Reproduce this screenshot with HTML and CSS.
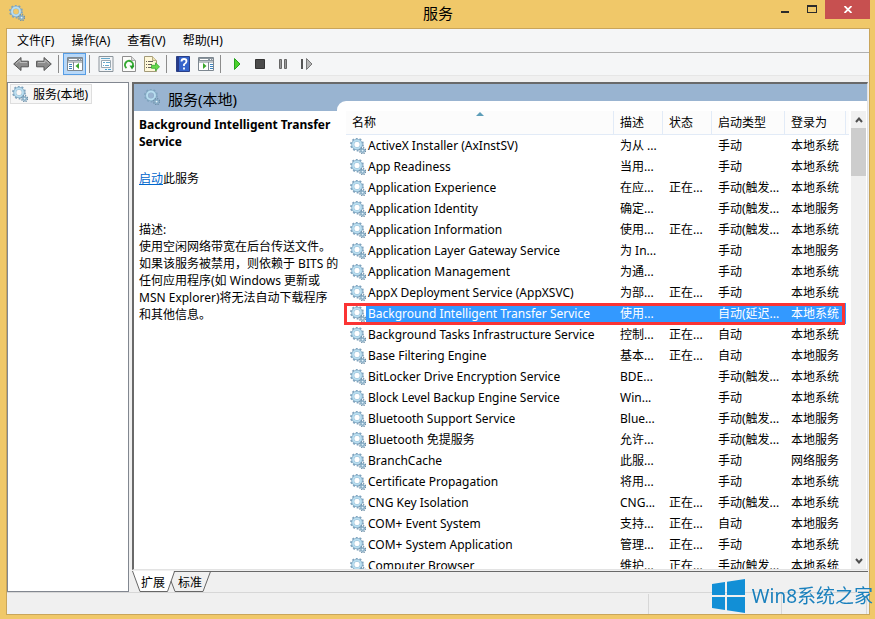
FILE: index.html
```
<!DOCTYPE html>
<html lang="zh-CN">
<head>
<meta charset="utf-8">
<title>服务</title>
<link rel="stylesheet" href="styles.css">
</head>
<body>
<svg class="defs" aria-hidden="true">
  <symbol id="gear" viewBox="0 0 16 16">
    <circle cx="7" cy="6.5" r="5.9" fill="none" stroke="#7fa3bd" stroke-width="2" stroke-dasharray="1.9 1.8"/>
    <circle cx="7" cy="6.5" r="4.2" fill="none" stroke="#83a9c4" stroke-width="2.9"/>
    <circle cx="7" cy="6.5" r="4" fill="none" stroke="#b9def0" stroke-width="1.9"/>
    <circle cx="12.600" cy="12.600" r="2.900" fill="none" stroke="#6d8fa8" stroke-width="1.500" stroke-dasharray="1.300 .98"/>
    <circle cx="12.600" cy="12.600" r="1.700" fill="#e4f2fa" stroke="#86adc6" stroke-width="1.500"/>
  </symbol>
</svg>
<header class="titlebar">
  <svg class="app-icon"><use href="#gear"/></svg>
  <h1>服务</h1>
  <div class="caption">
    <button class="cap" aria-label="最小化"><svg width="8" height="14"><path d="M0 11h8v2H0z" fill="#2b2b2b"/></svg></button>
    <button class="cap" aria-label="最大化"><svg width="10" height="14"><path d="M0 5h10v8H0zM1 7v5h8V7z" fill="#2b2b2b" fill-rule="evenodd"/></svg></button>
    <button class="cap close" aria-label="关闭"><svg width="8" height="7"><path d="M.5 0l7 7M7.500 0l-7 7" stroke="#fff" stroke-width="1.800"/></svg></button>
  </div>
</header>
<div class="window">
  <nav class="menubar">
    <button>文件(F)</button><button>操作(A)</button><button>查看(V)</button><button>帮助(H)</button>
  </nav>
  <div class="toolbar">
    <button aria-label="后退"><svg width="16" height="16"><path d="M.7 8L8 1.500v3.700h7.400v5.600H8v3.700z" fill="#8c8c8c" stroke="#555"/><path d="M3 7.500L7 4v2.500h7" fill="none" stroke="#bbb"/></svg></button>
    <button aria-label="前进"><svg width="16" height="16"><path d="M15.300 8L8 1.500v3.700H.6v5.600H8v3.700z" fill="#8c8c8c" stroke="#555"/><path d="M13 7.500L9 4v2.500H2" fill="none" stroke="#bbb"/></svg></button>
    <i class="sep"></i>
    <button class="on" aria-label="显示/隐藏控制台树"><svg width="16" height="16"><path d="M.5 1.500h15v13H.5z" fill="#fff" stroke="#7d8790"/><path d="M1 2h14v3H1z" fill="#8b959e"/><path d="M2 3.500h8M12 3.500h1M14 3.500h.7" stroke="#fff"/><path d="M1 6h14M6.500 6v8" stroke="#7d8790"/><path d="M2 8.500h3M2 10.500h3M2 12.500h3" stroke="#3d82bd"/><path d="M12 7v6L8.500 10z" fill="#3aa62a"/></svg></button>
    <i class="sep"></i>
    <button aria-label="属性"><svg width="16" height="16"><path d="M1 .5h14v15H1z" fill="#f3f5f7" stroke="#8c959c"/><path d="M3.500 4.500h9v7h-9z" fill="#fff" stroke="#9aa7b0"/><path d="M3 2.500h9M5 6.500h2M8 6.500h4M5 9.500h1M7 9.500h4" stroke="#65a8cb"/><path d="M7 13.500h2M10 13.500h3" stroke="#47a4d4"/></svg></button>
    <button aria-label="刷新"><svg width="16" height="16"><path d="M1.500.5h9l4 4v11h-13z" fill="#fcfcfa" stroke="#8e8e8e"/><path d="M10.500.5v4h4" fill="#ddd" stroke="#aaa"/><path d="M5.500 12A4 4 0 1 1 11.500 10.800" fill="none" stroke="#35a932" stroke-width="2"/><path d="M8.500 9.500l5 .3-2.500 3.700z" fill="#239d27"/></svg></button>
    <button aria-label="导出列表"><svg width="16" height="16"><path d="M.5.5h8l4 4v11H.5z" fill="#fff8d9" stroke="#a39a78"/><path d="M8.500.5v4h4" fill="#eee3b5" stroke="#b5ab85"/><path d="M2 5.500h1M4 5.500h5M2 8.500h1M4 8.500h4M2 11.500h1M4 11.500h4" stroke="#65605a"/><path d="M7.500 9.300h4V6.800l4 4-4 4v-2.500h-4z" fill="#69d94c" stroke="#35a932" stroke-width=".8"/></svg></button>
    <i class="sep"></i>
    <button aria-label="帮助"><svg width="14" height="16"><path d="M.5.5h13v15H.5z" fill="#3563ca" stroke="#2a3f86"/><path d="M1 1h2v14H1z" fill="#263a88"/><path d="M5.500 5.500Q5.500 3 8 3t2.500 2.300Q10.500 7 8 8.500V10M8 11.500v2" fill="none" stroke="#fff" stroke-width="1.8"/></svg></button>
    <button aria-label="显示/隐藏操作窗格"><svg width="16" height="16"><path d="M.5 1.500h15v13H.5z" fill="#fff" stroke="#7d8790"/><path d="M1 2h14v3H1z" fill="#8b959e"/><path d="M2 3.500h8M12 3.500h1M14 3.500h.7" stroke="#fff"/><path d="M1 6h14M10.500 6v8" stroke="#7d8790"/><path d="M12 8.500h3M12 10.500h3M12 12.500h3" stroke="#3d82bd"/><path d="M5 7v6l3.500-3z" fill="#3aa62a"/></svg></button>
    <i class="sep"></i>
    <button aria-label="启动服务"><svg width="16" height="16"><path d="M5.500 2.500v11l5.500-5.500z" fill="#4cd12e" stroke="#26a21e"/></svg></button>
    <button aria-label="停止服务"><svg width="16" height="16"><path d="M3.500 3.500h9v9h-9z" fill="#4b4b4b" stroke="#333"/></svg></button>
    <button aria-label="暂停服务"><svg width="16" height="16"><path d="M4.500 3.500h2v9h-2zM9.500 3.500h2v9h-2z" fill="#999" stroke="#666"/></svg></button>
    <button aria-label="重启服务"><svg width="16" height="16"><path d="M3 3h2v10H3z" fill="#555"/><path d="M8.500 2.500v11L14 8z" fill="#b5b5b5" stroke="#777"/></svg></button>
  </div>
  <main class="work">
    <aside class="tree"><button class="node"><svg class="ico"><use href="#gear"/></svg><span>服务(本地)</span></button></aside>
    <div class="right">
      <section class="pane">
        <div class="info">
          <h2><svg class="ico"><use href="#gear"/></svg>服务(本地)</h2>
          <div class="detail">
            <h3>Background Intelligent Transfer<br>Service</h3>
            <p class="action"><a href="#start">启动</a>此服务</p>
            <p class="desc">描述:<br>使用空闲网络带宽在后台传送文件。<br>如果该服务被禁用，则依赖于 BITS 的<br>任何应用程序(如 Windows 更新或<br>MSN Explorer)将无法自动下载程序<br>和其他信息。</p>
          </div>
        </div>
        <div class="list">
          <div class="clip">
            <table>
              <colgroup><col class="c-name"><col class="c-desc"><col class="c-state"><col class="c-type"><col class="c-logon"><col></colgroup>
              <thead><tr><th class="sorted">名称<svg class="sort" width="8" height="4"><path d="M0 4l4-4 4 4z" fill="#5d9db8"/></svg></th><th>描述</th><th>状态</th><th>启动类型</th><th>登录为</th><th></th></tr></thead>
              <tbody id="rows"></tbody>
            </table>
          </div>
          <div class="scroll">
            <button aria-label="向上滚动"><svg width="8" height="6"><path d="M1 5l3-3.500L7 5" fill="none" stroke="#505050" stroke-width="2"/></svg></button>
            <div class="thumb"></div>
            <button class="down" aria-label="向下滚动"><svg width="8" height="6"><path d="M1 1l3 3.500L7 1" fill="none" stroke="#505050" stroke-width="2"/></svg></button>
          </div>
        </div>
      </section>
      <div class="tabs">
        <svg class="tab-lines" width="80" height="21"><path d="M0 0l8 20.500h28L42 0z" fill="#fff"/><path d="M.5 0l7.500 20.500h27.500L42.500.500M39 10l4 10.500h28L78.500.500" fill="none" stroke="#666"/></svg>
        <button>扩展</button><button>标准</button>
      </div>
    </div>
  </main>
  <footer class="status"><div></div><div></div><div></div><div></div></footer>
</div>
<div class="mark">
  <svg width="33" height="34" viewBox="0 0 33 34"><path d="M0 5l13-2v13H0zM15 2.700L33 0v16H15zM0 18h13v13L0 29zM15 18h18v16l-18-2.700z" fill="#128fd6"/></svg>
  <span>Win8系统之家</span>
</div>
<script src="rows.js"></script>
</body>
</html>
```
FILE: styles.css
```
* { box-sizing: border-box; }
body {
  margin: 0;
  height: 100vh;
  display: flex;
  flex-direction: column;
  padding: 0 5px 4px 6px;
  background: #f0c869;
  color: #000;
  font: 12px/17px "Noto Sans", "Noto Sans CJK SC", sans-serif;
  overflow: hidden;
}
button { border: 0; padding: 0; background: none; font: inherit; color: inherit; }
h1, h2, h3, p { margin: 0; font: inherit; }
svg { display: block; flex: none; }
.defs { position: absolute; width: 0; height: 0; }
.ico { width: 16px; height: 16px; }

.titlebar { height: 28px; flex: none; display: grid; grid-template-columns: 1fr auto 1fr; }
.app-icon { width: 16px; height: 16px; margin: 5px 3px; }
.titlebar h1 { font-size: 15px; line-height: 27px; }
.caption { display: flex; justify-content: flex-end; height: 19px; }
.cap { width: 27px; display: flex; justify-content: center; }
.cap.close { width: 45px; align-items: center; background: #c75050; }

.window { flex: 1; min-height: 0; display: flex; flex-direction: column; border: 1px solid #c9a55a; background: #f0f0f0; }
.menubar { height: 24px; flex: none; display: flex; gap: 17px; padding-left: 10px; background: #f5f6f7; border-bottom: 1px solid #b0b0b0; }
.toolbar { height: 23px; flex: none; display: flex; align-items: flex-end; padding-left: 2px; background: #f5f6f7; border-bottom: 1px solid #e6e6e6; }
.toolbar button { width: 23px; height: 22px; display: flex; align-items: center; justify-content: center; }
.toolbar .on { background: #b8d8f8; border: 1px solid #569de5; }
.sep { width: 1px; height: 18px; margin: 0 4px 2px 3px; background: #8c8c8c; }

.work { flex: 1; min-height: 0; display: flex; gap: 3px; margin-top: 6px; }
.tree { width: 122px; flex: none; background: #fff; border: 1px solid #828790; padding: 1px 2px; }
.node { display: flex; align-items: center; gap: 5px; height: 20px; padding: 0 3px 0 1px; border: 1px solid #dedede; background: #f7f7f7; }
.right { flex: 1; min-width: 0; display: flex; flex-direction: column; margin-right: 1px; }
.pane { flex: 1; min-height: 0; display: flex; background: #99b4d1; border: 2px solid #696969; border-right: 1px solid #e3e3e3; border-bottom: 1px solid #e3e3e3; }
.info { width: 203px; flex: none; display: flex; flex-direction: column; }
.info h2 { height: 27px; display: flex; gap: 8px; padding: 5px 0 0 10px; font-size: 15px; line-height: 20px; }
.detail { flex: 1; position: relative; z-index: 1; background: #fff; padding: 5px 0 0 5px; white-space: nowrap; }
.detail h3 { font-weight: bold; }
.action { margin-top: 20px; }
.action a { color: #0066cc; }
.desc { margin-top: 34px; }
.list { flex: 1; min-width: 0; display: flex; margin-top: 17px; padding: 10px 1px 0 9px; background: #fff; border-top-left-radius: 9px; }
.clip { flex: 1; min-width: 0; overflow: hidden; margin-left: -3px; padding-left: 3px; }
table { width: 100%; table-layout: fixed; border-collapse: separate; border-spacing: 0; }
.c-name { width: 268px; }
.c-desc, .c-state { width: 49px; }
.c-type { width: 73px; }
.c-logon { width: 61px; }
th, td { padding: 0 0 0 6px; text-align: left; font-weight: normal; white-space: nowrap; overflow: hidden; }
th { position: relative; height: 24px; background: #fcfcfc; border-right: 1px solid #e2ebf7; border-bottom: 1px solid #e2ebf7; }
th:last-child { border-right: 0; }
td { height: 21px; }
td:first-child { padding-left: 4px; }
td span { display: flex; align-items: center; gap: 2px; }
.sort { position: absolute; left: calc(50% - 4px); top: 1px; }
.sel { position: relative; color: #fff; }
.sel td { background: #3399ff; }
.sel td:first-child { background: linear-gradient(to right, #fff 20px, #3399ff 20px); }
.sel td:last-child { background: #fff; }
.sel::after { content: ""; position: absolute; inset: 0 6px -1px -2px; border: 3px solid #fb3434; }
.scroll { width: 15px; flex: none; display: flex; flex-direction: column; background: #f0f0f0; }
.scroll button { height: 17px; display: flex; align-items: center; justify-content: center; }
.scroll .down { margin-top: auto; }
.thumb { height: 48px; background: #cdcdcd; }

.tabs { position: relative; height: 21px; flex: none; display: flex; gap: 13px; padding-left: 9px; border-top: 1px solid #696969; margin-top: 1px; }
.tab-lines { position: absolute; left: 0; top: -1px; }
.tabs button { position: relative; }
.status { height: 22px; flex: none; display: flex; border-top: 1px solid #d7d7d7; }
.status div { border-right: 1px solid #d7d7d7; width: 85px; margin-top: 1px; }
.status div:first-child { flex: 1; }
.status div:nth-child(2) { width: 133px; }
.status div:last-child { width: 2px; border: 0; }

.mark { position: fixed; right: 2px; bottom: 6px; display: flex; align-items: center; gap: 7px; color: #1a80bd; font-size: 19px; line-height: 34px; }
```
FILE: rows.js
```
const rows = `ActiveX Installer (AxInstSV)|为从 ...||手动|本地系统
App Readiness|当用...||手动|本地系统
Application Experience|在应...|正在...|手动(触发...|本地系统
Application Identity|确定...||手动(触发...|本地服务
Application Information|使用...|正在...|手动(触发...|本地系统
Application Layer Gateway Service|为 In...||手动|本地服务
Application Management|为通...||手动|本地系统
AppX Deployment Service (AppXSVC)|为部...|正在...|手动|本地系统
Background Intelligent Transfer Service|使用...||自动(延迟...|本地系统
Background Tasks Infrastructure Service|控制...|正在...|自动|本地系统
Base Filtering Engine|基本...|正在...|自动|本地服务
BitLocker Drive Encryption Service|BDE...||手动(触发...|本地系统
Block Level Backup Engine Service|Win...||手动|本地系统
Bluetooth Support Service|Blue...||手动(触发...|本地服务
Bluetooth 免提服务|允许...||手动(触发...|本地服务
BranchCache|此服...||手动|网络服务
Certificate Propagation|将用...||手动|本地系统
CNG Key Isolation|CNG...|正在...|手动(触发...|本地系统
COM+ Event System|支持...|正在...|自动|本地服务
COM+ System Application|管理...|正在...|手动|本地系统
Computer Browser|维护...|正在...|手动(触发...|本地系统`.split("\n").map(r => r.split("|"));
document.getElementById("rows").innerHTML = rows.map((r, i) =>
  `<tr${i === 8 ? ' class="sel"' : ""}><td><span><svg class="ico"><use href="#gear"/></svg>${r[0]}</span></td>` +
  r.slice(1).map(c => `<td>${c}</td>`).join("") + "<td></td></tr>").join("");
```
